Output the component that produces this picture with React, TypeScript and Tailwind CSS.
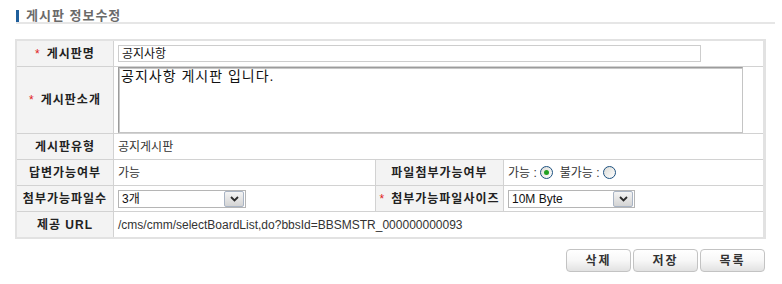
import React from 'react';

const font = { fontFamily: '"Liberation Sans", "Noto Sans CJK KR", sans-serif' };

function Label({ children, required }: { children: React.ReactNode; required?: boolean }) {
  return (
    <div className="bg-[#f3f3f3] flex items-center justify-center text-[12px] font-bold text-[#222] tracking-[1px]">
      {required && <span className="text-[#e02020] font-normal mr-[6px]">*</span>}
      {children}
    </div>
  );
}

function Cell({ children, span }: { children: React.ReactNode; span?: boolean }) {
  return (
    <div className={`bg-white flex items-center pl-[4px] text-[12px] text-[#333] ${span ? 'col-span-3' : ''}`}>
      {children}
    </div>
  );
}

function FakeSelect({ value, width }: { value: string; width: string }) {
  return (
    <div className={`flex items-center h-[18px] border border-[#b5b5b5] bg-white ${width}`}>
      <span className="flex-1 pl-[3px] text-[12px] text-[#111] leading-none">{value}</span>
      <span className="w-[20px] h-[16px] mr-px flex items-center justify-center border border-[#a9b4c4] rounded-[2px] bg-gradient-to-b from-[#f4f4f4] to-[#d4d4d4]">
        <svg width="9" height="6" viewBox="0 0 9 6">
          <path d="M1 1 L4.5 4.5 L8 1" fill="none" stroke="#2b2b2b" strokeWidth="1.8" />
        </svg>
      </span>
    </div>
  );
}

function Radio({ checked }: { checked?: boolean }) {
  return (
    <span className="inline-flex items-center justify-center w-[13px] h-[13px] rounded-full border border-[#1c5180] bg-gradient-to-br from-[#dcdcd7] to-white">
      {checked && <span className="w-[5px] h-[5px] rounded-full bg-[#21a121]" />}
    </span>
  );
}

function Btn({ children }: { children: React.ReactNode }) {
  return (
    <button className="w-[65px] h-[23px] rounded-[4px] border border-[#c3c3c3] bg-gradient-to-b from-white via-[#f7f7f7] to-[#e2e2e2] text-[12px] font-bold text-[#333] tracking-[2px]">
      {children}
    </button>
  );
}

export default function App() {
  return (
    <div className="w-[782px] h-[284px] bg-white" style={font}>
      {/* Title */}
      <div className="pt-[9px] pl-[16px] w-[775px]">
        <div className="flex items-center h-[13px]">
          <span className="w-[3px] h-[12px] bg-[#1f5f9c]" />
          <span className="ml-[7px] text-[13px] font-bold text-[#6a6a6a] tracking-[1px] leading-none">게시판 정보수정</span>
        </div>
        <div className="h-[2px] bg-[#e6e6e6]" />
      </div>

      {/* Form table */}
      <div className="mt-[15px] ml-[15px] w-[751px] border-l-2 border-t-2 border-b-2 border-r-[3px] border-[#e2e2e2]">
        <div className="grid grid-cols-[96px_261px_127px_1fr] grid-rows-[25px_66px_25px_25px_25px_25px] gap-px bg-[#d2d2d2]">
          <Label required>게시판명</Label>
          <Cell span>
            <div className="w-[583px] h-[17px] border border-[#cdcdcd] flex items-center pl-[3px] text-[12px] text-[#111]">
              공지사항
            </div>
          </Cell>

          <Label required>게시판소개</Label>
          <div className="col-span-3 bg-white pl-[4px]">
            <div className="w-[625px] h-[66px] border border-[#9c9c9c] border-r-[#c4c4c4] border-b-[#c4c4c4] shadow-[inset_1px_1px_0_#c8c8c8] pl-[2px] text-[14px] text-[#111] leading-[17px] tracking-[1px]">
              공지사항 게시판 입니다.
            </div>
          </div>

          <Label>게시판유형</Label>
          <Cell span>공지게시판</Cell>

          <Label>답변가능여부</Label>
          <Cell>가능</Cell>
          <Label>파일첨부가능여부</Label>
          <Cell>
            <span className="mr-[3px]">가능 :</span>
            <Radio checked />
            <span className="ml-[7px] mr-[3px]">불가능 :</span>
            <Radio />
          </Cell>

          <Label>첨부가능파일수</Label>
          <Cell>
            <FakeSelect value="3개" width="w-[128px]" />
          </Cell>
          <Label required>첨부가능파일사이즈</Label>
          <Cell>
            <FakeSelect value="10M Byte" width="w-[127px]" />
          </Cell>

          <Label>제공 URL</Label>
          <Cell span>/cms/cmm/selectBoardList,do?bbsId=BBSMSTR_000000000093</Cell>
        </div>
      </div>

      {/* Buttons */}
      <div className="flex justify-end gap-[2px] w-[765px] mt-[10px]">
        <Btn>삭제</Btn>
        <Btn>저장</Btn>
        <Btn>목록</Btn>
      </div>
    </div>
  );
}
